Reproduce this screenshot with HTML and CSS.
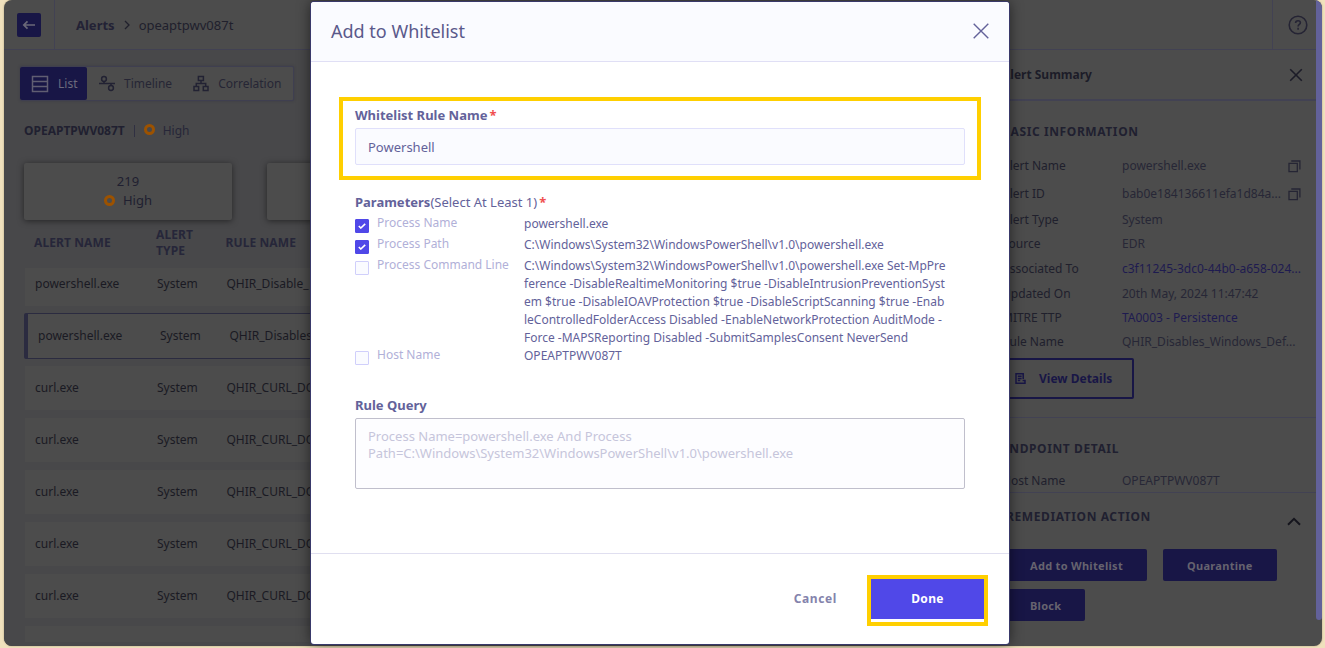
FILE: index.html
```html
<!DOCTYPE html>
<html lang="en">
<head>
    <meta charset="UTF-8">
    <meta name="viewport" content="width=device-width,initial-scale=1.0">
    <title>Alerts | Add to Whitelist</title>
    <link rel="stylesheet" href="styles.css">
</head>
<body>
    <div class="app">
        <div class="screen">
            <header class="topbar">
                <div class="back-cell">
                    <button class="back-btn" aria-label="Back">
                        <svg width="14" height="10" viewBox="0 0 14 10" fill="none" stroke="currentColor" stroke-width="1.7"><path d="M13 5H2M5.5 1.3L1.8 5l3.7 3.7"/></svg>
                    </button>
                </div>
                <div class="breadcrumb">
                    <b>Alerts</b>
                    <svg width="6" height="10" viewBox="0 0 6 10" fill="none" stroke="currentColor" stroke-width="1.3"><path d="M1 1l4 4-4 4"/></svg>
                    <span>opeaptpwv087t</span>
                </div>
                <div class="help-cell">
                    <svg width="20" height="20" viewBox="0 0 20 20" fill="none" stroke="currentColor" stroke-width="1.6"><circle cx="10" cy="10" r="8.8"/><path d="M7.6 8c0-1.5 1-2.3 2.4-2.3s2.4.9 2.4 2.1c0 1.7-2.3 1.7-2.3 3.6"/><path d="M10.1 12.8v1.9"/></svg>
                </div>
            </header>
            <div class="content">
                <section class="alerts">
                    <nav class="tabs">
                        <a class="tab active">
                            <svg width="18" height="18" viewBox="0 0 18 18" fill="none" stroke="currentColor" stroke-width="1.5"><path d="M1.5 1.5h15v15h-15zM1.5 6.5h15M1.5 11.5h15"/></svg>
                            List
                        </a>
                        <a class="tab tab-timeline">
                            <svg width="16" height="17" viewBox="0 0 16 17" fill="none" stroke="currentColor" stroke-width="1.5"><circle cx="5" cy="4" r="2.4"/><circle cx="12" cy="13" r="2.4"/><path d="M0 8.5h16M5 6.4v2M12 8.5v2"/></svg>
                            Timeline
                        </a>
                        <a class="tab tab-correlation">
                            <svg width="16" height="17" viewBox="0 0 16 17" fill="none" stroke="currentColor" stroke-width="1.5"><path d="M5.4 1.4h5v4h-5zM1 11.6h4.6v4H1zM10.3 11.6h4.7v4h-4.7zM8 5.4v3.2M3.3 11.6v-3h9.4v3"/></svg>
                            Correlation
                        </a>
                    </nav>
                    <div class="host-line">
                        <b>OPEAPTPWV087T</b>
                        <span class="sep"></span>
                        <span class="severity-ring"></span>
                        <span>High</span>
                    </div>
                    <div class="cards">
                        <div class="card">
                            <div>219</div>
                            <div class="card-label"><span class="severity-ring"></span>High</div>
                        </div>
                        <div class="card"></div>
                    </div>
                    <div class="table">
                        <div class="row head"><span>ALERT NAME</span><span>ALERT<br>TYPE</span><span>RULE NAME</span></div>
                        <div class="row first"><span>powershell.exe</span><span>System</span><span>QHIR_Disable_</span></div>
                        <div class="row selected"><span>powershell.exe</span><span>System</span><span>QHIR_Disables</span></div>
                        <div class="row"><span>curl.exe</span><span>System</span><span>QHIR_CURL_DO</span></div>
                        <div class="row"><span>curl.exe</span><span>System</span><span>QHIR_CURL_DO</span></div>
                        <div class="row"><span>curl.exe</span><span>System</span><span>QHIR_CURL_DO</span></div>
                        <div class="row"><span>curl.exe</span><span>System</span><span>QHIR_CURL_DO</span></div>
                        <div class="row"><span>curl.exe</span><span>System</span><span>QHIR_CURL_DO</span></div>
                        <div class="row last"></div>
                    </div>
                </section>
                <aside class="summary">
                    <div class="summary-head">
                        <b>Alert Summary</b>
                        <svg width="14" height="14" viewBox="0 0 14 14" fill="none" stroke="currentColor" stroke-width="1.6"><path d="M1.2 1.2l11.6 11.6M12.8 1.2L1.2 12.8"/></svg>
                    </div>
                    <div class="basic">
                        <h3>BASIC INFORMATION</h3>
                        <dl>
                            <div class="info tall"><dt>Alert Name</dt><dd>powershell.exe</dd><svg class="copy" width="13" height="13" viewBox="0 0 13 13" fill="none" stroke="currentColor" stroke-width="1.3"><path d="M1 3.4h8.3v8.3H1zM3.3 1h8.6v8.6"/></svg></div>
                            <div class="info tall"><dt>Alert ID</dt><dd>bab0e184136611efa1d84a...</dd><svg class="copy" width="13" height="13" viewBox="0 0 13 13" fill="none" stroke="currentColor" stroke-width="1.3"><path d="M1 3.4h8.3v8.3H1zM3.3 1h8.6v8.6"/></svg></div>
                            <div class="info"><dt>Alert Type</dt><dd>System</dd></div>
                            <div class="info"><dt>Source</dt><dd>EDR</dd></div>
                            <div class="info assoc"><dt>Associated To</dt><dd class="link">c3f11245-3dc0-44b0-a658-024...</dd></div>
                            <div class="info"><dt>Updated On</dt><dd>20th May, 2024 11:47:42</dd></div>
                            <div class="info"><dt>MITRE TTP</dt><dd class="link">TA0003 - Persistence</dd></div>
                            <div class="info"><dt>Rule Name</dt><dd>QHIR_Disables_Windows_Def...</dd></div>
                        </dl>
                        <button class="view-btn">
                            <svg width="11" height="11" viewBox="0 0 11 11" fill="none" stroke="currentColor" stroke-width="1.5"><path d="M8.2 6V.8H1v9.4h5M2.8 3.2h3.8M2.8 5.4h3.8M2.8 7.6h2.4M6 10.2h4V7.6H7.6"/></svg>
                            View Details
                        </button>
                    </div>
                    <div class="endpoint">
                        <h3>ENDPOINT DETAIL</h3>
                        <dl class="info"><dt>Host Name</dt><dd>OPEAPTPWV087T</dd></dl>
                    </div>
                    <div class="remediation">
                        <div class="remediation-head">
                            <h3>REMEDIATION ACTION</h3>
                            <svg width="14" height="9" viewBox="0 0 14 9" fill="none" stroke="currentColor" stroke-width="2"><path d="M1 7.8l6-6 6 6"/></svg>
                        </div>
                        <div class="remediation-actions">
                            <button>Add to Whitelist</button>
                            <button>Quarantine</button>
                            <button>Block</button>
                        </div>
                    </div>
                </aside>
            </div>
        </div>
        <div class="scrollbar"></div>
    </div>

    <div class="modal">
        <div class="modal-head">
            <h2>Add to Whitelist</h2>
            <svg width="16" height="16" viewBox="0 0 16 16" fill="none" stroke="currentColor" stroke-width="1.4"><path d="M.7.7l14.6 14.6M15.3.7L.7 15.3"/></svg>
        </div>
        <div class="modal-body">
            <div class="name-field">
                <label for="rule-name">Whitelist Rule Name<i>*</i></label>
                <input id="rule-name" type="text" value="Powershell">
            </div>
            <div class="params">
                <div class="params-title"><b>Parameters</b>(Select At Least 1)<i>*</i></div>
                <div class="param">
                    <span class="check on"><svg width="8" height="6" viewBox="0 0 8 6" fill="none" stroke="currentColor" stroke-width="1.6"><path d="M.8 3l2 2L7.2.8"/></svg></span>
                    <span class="param-name">Process Name</span>
                    <span class="param-value">powershell.exe</span>
                </div>
                <div class="param">
                    <span class="check on"><svg width="8" height="6" viewBox="0 0 8 6" fill="none" stroke="currentColor" stroke-width="1.6"><path d="M.8 3l2 2L7.2.8"/></svg></span>
                    <span class="param-name">Process Path</span>
                    <span class="param-value">C:\Windows\System32\WindowsPowerShell\v1.0\powershell.exe</span>
                </div>
                <div class="param multiline">
                    <span class="check"></span>
                    <span class="param-name">Process Command Line</span>
                    <span class="param-value">C:\Windows\System32\WindowsPowerShell\v1.0\powershell.exe Set-MpPre<br>ference -DisableRealtimeMonitoring $true -DisableIntrusionPreventionSyst<br>em $true -DisableIOAVProtection $true -DisableScriptScanning $true -Enab<br>leControlledFolderAccess Disabled -EnableNetworkProtection AuditMode -<br>Force -MAPSReporting Disabled -SubmitSamplesConsent NeverSend</span>
                </div>
                <div class="param">
                    <span class="check"></span>
                    <span class="param-name">Host Name</span>
                    <span class="param-value">OPEAPTPWV087T</span>
                </div>
            </div>
            <div class="query">
                <div class="query-title">Rule Query</div>
                <div class="query-box">Process Name=powershell.exe And Process<br>Path=C:\Windows\System32\WindowsPowerShell\v1.0\powershell.exe</div>
            </div>
        </div>
        <div class="modal-foot">
            <button class="cancel">Cancel</button>
            <div class="done-frame"><button class="done">Done</button></div>
        </div>
    </div>
</body>
</html>
```
FILE: styles.css
```css
:root {
    --sand: #f0e1bd;
    --dim-white: #4c4c4c;
    --dim-page: #48484a;
    --dim-line: #424253;
    --dim-text: #202030;
    --dim-primary: #181646;
    --primary: #5048e8;
    --text: #63629a;
    --heading: #5a598b;
    --yellow: #ffcf00;
}
* {
    box-sizing: border-box;
}
body {
    margin: 0;
    height: 648px;
    overflow: hidden;
    position: relative;
    background: var(--sand);
    font-family: "Noto Sans", sans-serif;
    font-size: 12px;
    color: var(--dim-text);
}
h2, h3, dl, dd {
    margin: 0;
}
button {
    border: 0;
    padding: 0;
    font-family: inherit;
    font-size: 12px;
    font-weight: 700;
    letter-spacing: 0.3px;
}
svg {
    display: block;
    flex-shrink: 0;
}
.app {
    width: 1318px;
    height: 646px;
    margin-left: 4px;
    display: flex;
    border-radius: 8px;
    overflow: hidden;
    background: var(--dim-white);
    box-shadow: 0 0 2px #a89b7c;
}
.screen {
    width: 1312px;
    display: flex;
    flex-direction: column;
}
.scrollbar {
    width: 6px;
    height: 620px;
    background: #62619a;
    border-radius: 0 0 3px 3px;
}

/* Top bar */
.topbar {
    height: 50px;
    flex-shrink: 0;
    display: flex;
    border-bottom: 1px solid var(--dim-line);
}
.back-cell {
    width: 51px;
    padding: 13px;
    border-right: 1px solid var(--dim-line);
}
.back-btn {
    width: 24px;
    height: 24px;
    display: flex;
    align-items: center;
    justify-content: center;
    background: var(--dim-primary);
    color: #6a6878;
    border-radius: 2px;
}
.breadcrumb {
    display: flex;
    align-items: center;
    gap: 9px;
    padding-left: 21px;
    font-size: 13px;
    color: #20202c;
}
.breadcrumb b {
    color: #232235;
}
.help-cell {
    width: 44px;
    margin-left: auto;
    padding: 15px 0 0 15px;
    border-left: 1px solid var(--dim-line);
    color: #252434;
}
.content {
    flex: 1;
    min-height: 0;
    display: flex;
    justify-content: space-between;
    overflow: hidden;
}

/* Alerts list */
.alerts {
    width: 307px;
    overflow: hidden;
    background: var(--dim-page);
}
.tabs {
    width: 274px;
    height: 35px;
    margin: 16px 0 0 16px;
    display: flex;
    background: var(--dim-white);
    border: 1px solid #3f3f50;
    border-left: 0;
    border-radius: 2px;
    box-shadow: 0 0 3px rgba(30, 30, 60, 0.3);
}
.tab {
    display: flex;
    align-items: center;
    gap: 9px;
    color: #262635;
}
.tab svg {
    color: #222233;
}
.tab.active {
    width: 67px;
    padding-left: 11px;
    background: var(--dim-primary);
    color: #6c6a7c;
    border-radius: 2px;
}
.tab.active svg {
    color: #605e72;
}
.tab-timeline {
    margin-left: 12px;
}
.tab-correlation {
    margin-left: 21px;
}
.host-line {
    height: 20px;
    margin: 19px 0 0 20px;
    display: flex;
    align-items: center;
    color: #262638;
}
.host-line b {
    color: #202030;
}
.sep {
    width: 1px;
    height: 12px;
    margin: 2px 9px 0 9px;
    background: #303042;
}
.severity-ring {
    width: 11px;
    height: 11px;
    margin: -1px 8px 0 0;
    border: 3px solid #9c5200;
    border-radius: 50%;
}
.cards {
    margin: 23px 0 0 20px;
    display: flex;
    gap: 35px;
}
.card {
    width: 208px;
    height: 57px;
    flex-shrink: 0;
    padding-top: 9px;
    font-size: 13px;
    line-height: 19px;
    text-align: center;
    background: var(--dim-white);
    border-radius: 2px;
    box-shadow: 0 1px 6px rgba(0, 0, 0, 0.5);
}
.card-label {
    display: flex;
    align-items: center;
    justify-content: center;
}
.table {
    width: 400px;
    margin-left: 21px;
    display: flex;
    flex-direction: column;
    gap: 8px;
}
.row {
    height: 44px;
    flex-shrink: 0;
    display: grid;
    grid-template-columns: 122px 69.5px 1fr;
    align-items: center;
    padding: 0 0 2px 10px;
    background: var(--dim-white);
    color: #1a1a23;
}
.row.head {
    height: 48px;
    margin-bottom: -8px;
    padding: 0 0 2px 9px;
    line-height: 16px;
    background: none;
    color: #262639;
    font-weight: 700;
    letter-spacing: 0.1px;
}
.row.first {
    height: 38px;
    padding-bottom: 8px;
}
.row.selected {
    height: 46px;
    margin: -1px 0 -1px -1px;
    border: 1px solid #2b2b40;
    border-left-width: 4px;
    border-radius: 2px;
}
.row.last {
    height: 16px;
}

/* Alert summary */
.summary {
    width: 331px;
    color: #20202c;
}
.summary-head {
    height: 51px;
    display: flex;
    align-items: center;
    justify-content: space-between;
    padding: 0 13px 0 17px;
    border-bottom: 2px solid var(--dim-line);
    color: #1c1c28;
}
.summary h3 {
    font-size: 12px;
    line-height: 16px;
    font-weight: 700;
    letter-spacing: 0.6px;
    color: #202030;
}
.basic {
    height: 317px;
    padding: 23px 0 0 17px;
    border-bottom: 1px solid var(--dim-line);
}
.basic dl {
    margin-top: 12px;
}
.info {
    height: 24px;
    display: grid;
    grid-template-columns: 120px 166px 13px;
    align-items: center;
    padding-bottom: 2px;
    white-space: nowrap;
}
.info.tall {
    height: 28px;
}
.info.assoc {
    height: 26px;
}
.info dd {
    color: #272736;
}
.info dd.link {
    color: #1e1b50;
}
.info.assoc dd {
    padding-top: 1px;
}
.copy {
    margin-top: 2px;
    color: #252534;
}
.view-btn {
    width: 132px;
    height: 41px;
    margin-top: 4px;
    display: flex;
    align-items: center;
    gap: 13px;
    padding-left: 11px;
    background: none;
    border: 2px solid var(--dim-primary);
    border-radius: 2px;
    color: var(--dim-primary);
    letter-spacing: 0;
}
.endpoint {
    height: 75px;
    padding: 23px 0 0 17px;
    border-bottom: 1px solid var(--dim-line);
}
.endpoint .info {
    margin-top: 12px;
}
.remediation {
    padding: 16px 15px 0 21px;
}
.remediation-head {
    height: 24px;
    display: flex;
    justify-content: space-between;
    align-items: flex-start;
}
.remediation-head svg {
    margin-top: 8px;
    color: #15151d;
}
.remediation-actions {
    margin-top: 16px;
    display: flex;
    flex-wrap: wrap;
    gap: 8px 16px;
}
.remediation-actions button {
    height: 32px;
    padding: 0 24px;
    font-size: 11px;
    background: var(--dim-primary);
    color: #66636f;
    border-radius: 2px;
}

/* Whitelist modal */
.modal {
    position: absolute;
    left: 311px;
    top: 2px;
    width: 698px;
    height: 642px;
    display: flex;
    flex-direction: column;
    background: #fff;
    border-radius: 3px;
    box-shadow: 0 0 0 1px #39396a, 0 0 14px rgba(0, 0, 0, 0.6);
    color: var(--text);
}
.modal i {
    margin-left: 2px;
    font-style: normal;
    font-weight: 700;
    color: #f0504f;
}
.modal-head {
    height: 60px;
    display: flex;
    align-items: center;
    justify-content: space-between;
    padding: 0 20px 2px;
    background: #fafbff;
    border-bottom: 1px solid #e0dff5;
    border-radius: 3px 3px 0 0;
}
.modal-head h2 {
    font-size: 18px;
    font-weight: 400;
    color: var(--heading);
}
.modal-body {
    flex: 1;
    padding: 35px 28px 0;
}
.name-field {
    width: 642px;
    height: 83px;
    padding: 5px 12px 0;
    border: 4px solid var(--yellow);
}
.name-field label {
    display: block;
    height: 22px;
    line-height: 18px;
    font-size: 13px;
    font-weight: 700;
}
.name-field input {
    display: block;
    width: 610px;
    height: 37px;
    padding: 0 12px;
    background: #fafbff;
    border: 1px solid #e0e0fb;
    border-radius: 2px;
    font-family: inherit;
    font-size: 13px;
    color: var(--text);
}
.params {
    margin: 12px 0 0 16px;
    line-height: 18px;
}
.params-title {
    height: 22px;
    font-size: 13px;
    line-height: 20px;
}
.param {
    display: grid;
    grid-template-columns: 22px 147px 1fr;
    align-items: start;
    margin-bottom: 3px;
}
.param.multiline {
    margin-bottom: 0;
}
.check {
    width: 14px;
    height: 14px;
    margin: 5px 0 -1px;
    display: flex;
    align-items: center;
    justify-content: center;
    background: #fafbff;
    border: 1px solid #d0cffb;
    border-radius: 1px;
    color: #fff;
}
.check.on {
    background: var(--primary);
    border-color: var(--primary);
}
.param-name {
    color: #b1b0d8;
}
.param-value {
    padding-top: 1px;
    margin-bottom: -1px;
    white-space: nowrap;
}
.query {
    margin: 31px 0 0 16px;
}
.query-title {
    height: 23px;
    font-size: 13px;
    line-height: 20px;
    font-weight: 700;
}
.query-box {
    width: 610px;
    height: 71px;
    padding: 9px 12px;
    background: #fdfdff;
    border: 1px solid #c0bfcc;
    border-radius: 2px;
    font-size: 13px;
    line-height: 17px;
    color: #c6c5db;
}
.modal-foot {
    height: 91px;
    display: flex;
    justify-content: flex-end;
    align-items: flex-start;
    padding: 21px 21px 0 0;
    border-top: 1px solid #e0dff0;
}
.cancel {
    height: 40px;
    margin: 3px 30px 0 0;
    background: none;
    color: #8483ac;
    letter-spacing: 0.6px;
}
.done-frame {
    width: 121px;
    height: 51px;
    border: 4px solid var(--yellow);
}
.done {
    display: block;
    width: 113px;
    height: 40px;
    padding-bottom: 2px;
    background: var(--primary);
    color: #fff;
}
```
